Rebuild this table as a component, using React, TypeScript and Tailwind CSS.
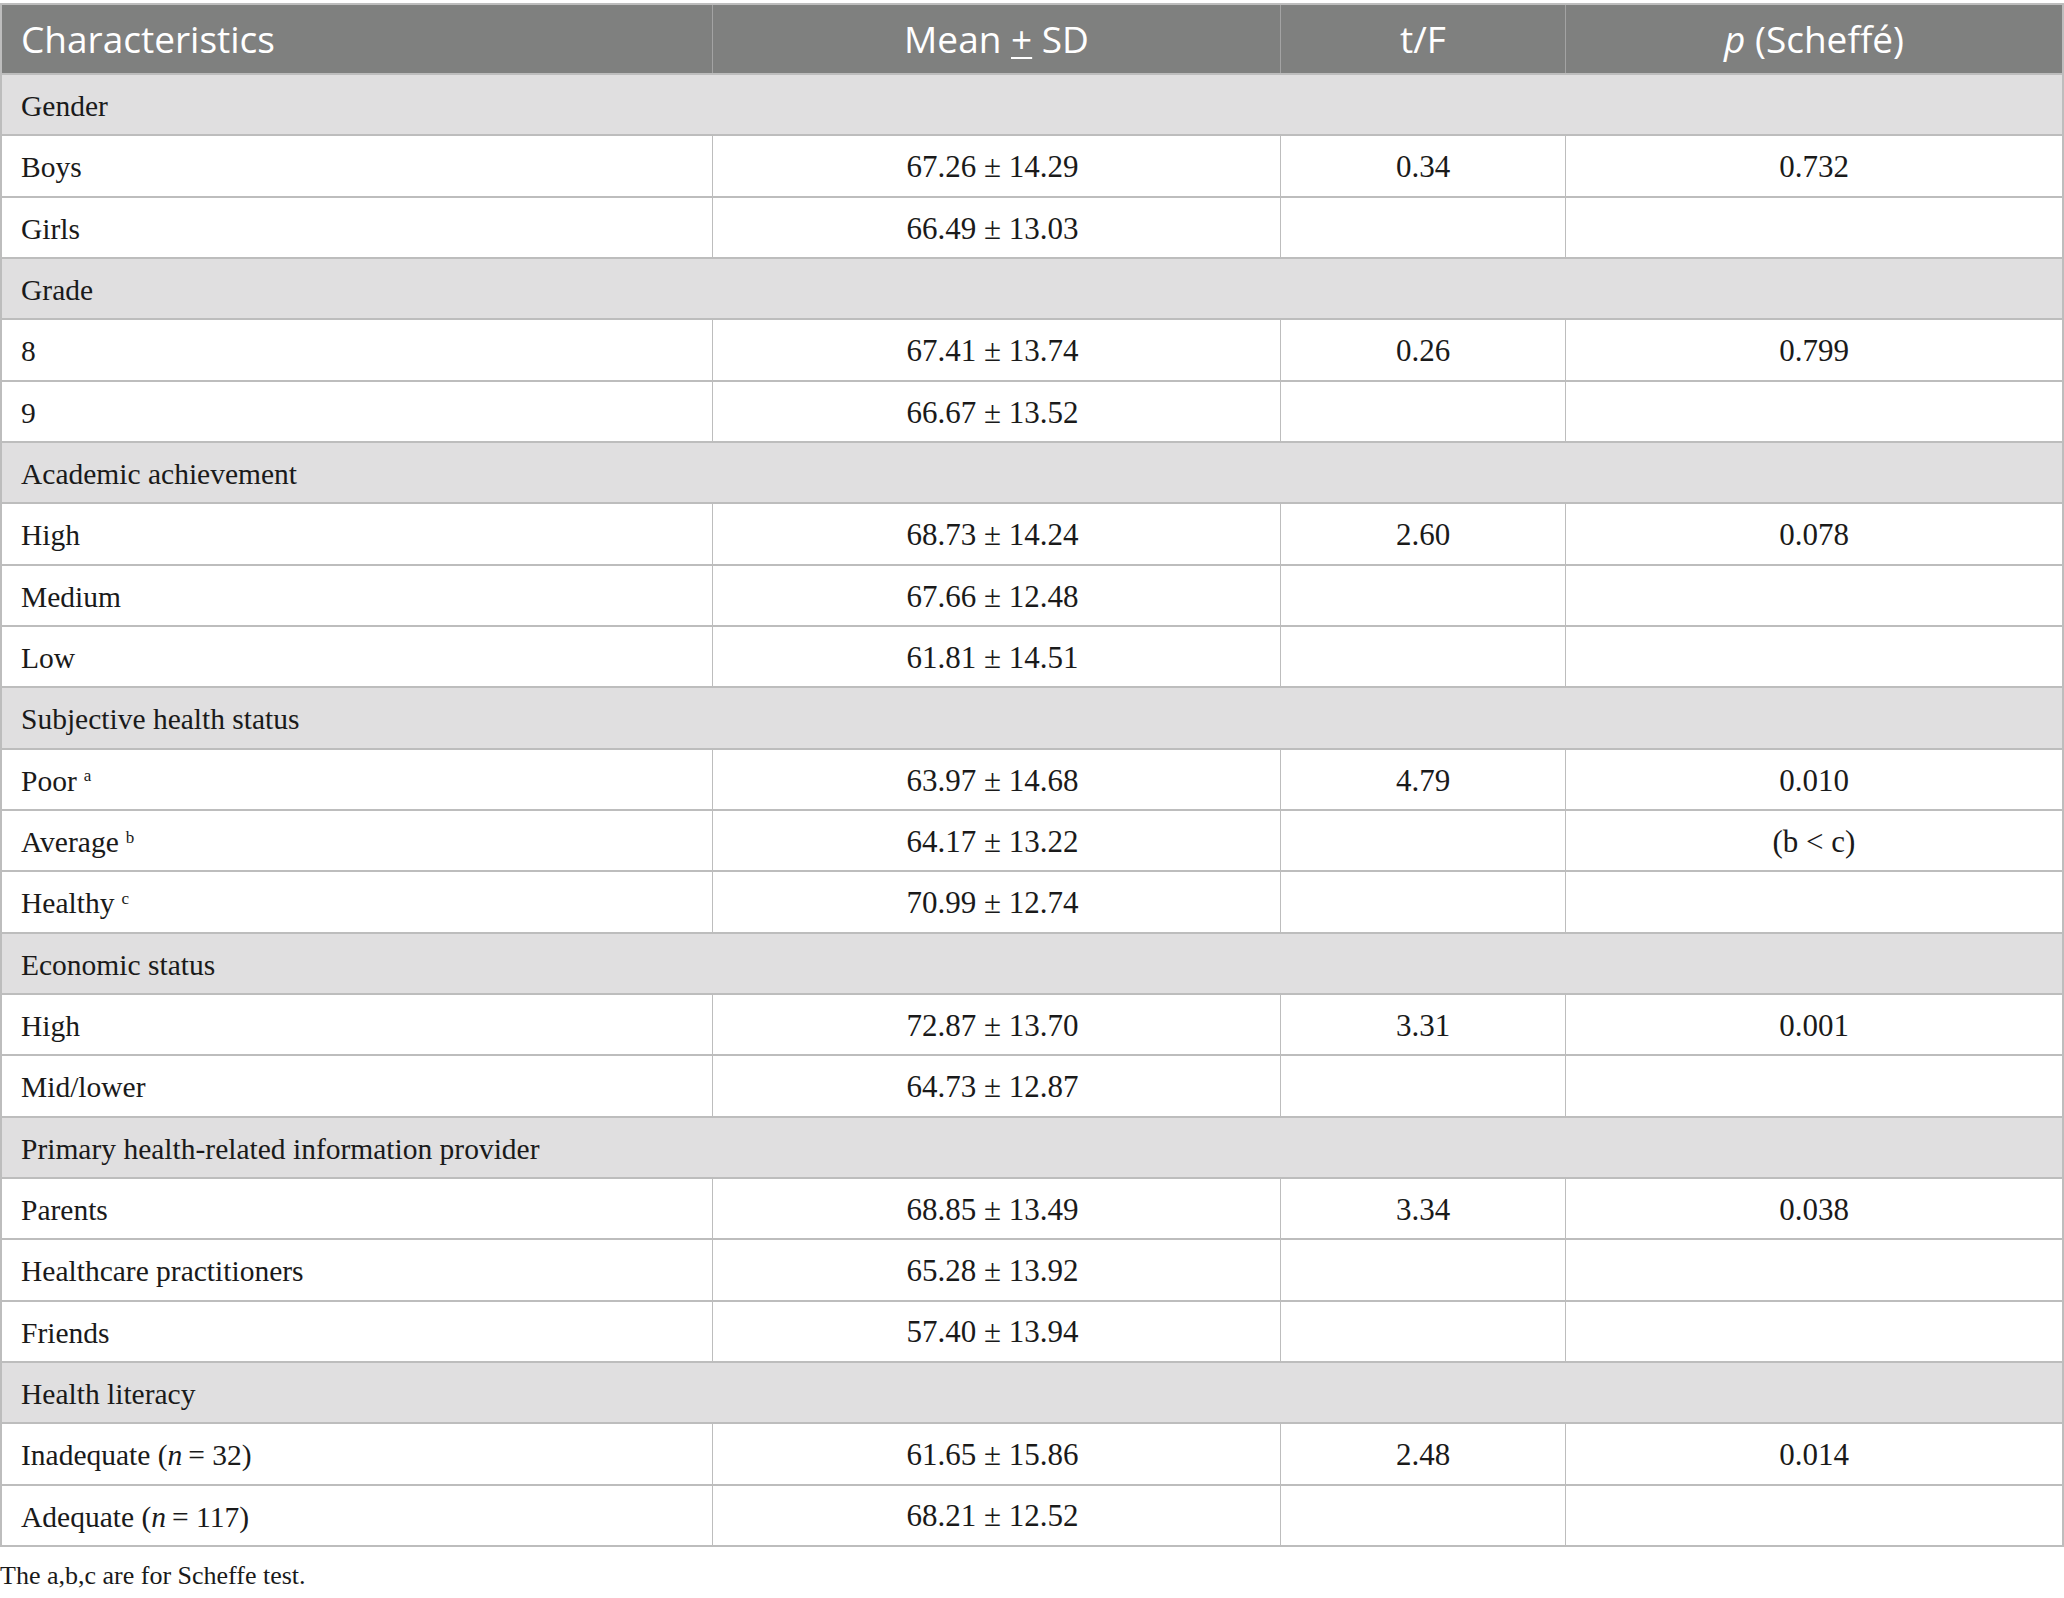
type Row =
  | { kind: "group"; label: string }
  | { kind: "data"; label: React.ReactNode; mean: string; t?: string; p?: string };

const sup = (s: string) => (
  <sup className="relative top-[-5px] ml-[7px] text-[17px] align-super leading-none">{s}</sup>
);

const rows: Row[] = [
  { kind: "group", label: "Gender" },
  { kind: "data", label: "Boys", mean: "67.26 ± 14.29", t: "0.34", p: "0.732" },
  { kind: "data", label: "Girls", mean: "66.49 ± 13.03" },
  { kind: "group", label: "Grade" },
  { kind: "data", label: "8", mean: "67.41 ± 13.74", t: "0.26", p: "0.799" },
  { kind: "data", label: "9", mean: "66.67 ± 13.52" },
  { kind: "group", label: "Academic achievement" },
  { kind: "data", label: "High", mean: "68.73 ± 14.24", t: "2.60", p: "0.078" },
  { kind: "data", label: "Medium", mean: "67.66 ± 12.48" },
  { kind: "data", label: "Low", mean: "61.81 ± 14.51" },
  { kind: "group", label: "Subjective health status" },
  { kind: "data", label: <>Poor{sup("a")}</>, mean: "63.97 ± 14.68", t: "4.79", p: "0.010" },
  { kind: "data", label: <>Average{sup("b")}</>, mean: "64.17 ± 13.22", p: "(b < c)" },
  { kind: "data", label: <>Healthy{sup("c")}</>, mean: "70.99 ± 12.74" },
  { kind: "group", label: "Economic status" },
  { kind: "data", label: "High", mean: "72.87 ± 13.70", t: "3.31", p: "0.001" },
  { kind: "data", label: "Mid/lower", mean: "64.73 ± 12.87" },
  { kind: "group", label: "Primary health-related information provider" },
  { kind: "data", label: "Parents", mean: "68.85 ± 13.49", t: "3.34", p: "0.038" },
  { kind: "data", label: "Healthcare practitioners", mean: "65.28 ± 13.92" },
  { kind: "data", label: "Friends", mean: "57.40 ± 13.94" },
  { kind: "group", label: "Health literacy" },
  {
    kind: "data",
    label: (
      <>
        Inadequate (<i className="mr-[6px]">n</i>= 32)
      </>
    ),
    mean: "61.65 ± 15.86",
    t: "2.48",
    p: "0.014",
  },
  {
    kind: "data",
    label: (
      <>
        Adequate (<i className="mr-[6px]">n</i>= 117)
      </>
    ),
    mean: "68.21 ± 12.52",
  },
];

const cols = "grid grid-cols-[710px_568px_285px_1fr]";

export default function App() {
  return (
    <div className="w-[2064px] min-h-[1598px] bg-white pt-[3px] text-[#1a1a1a] font-['Liberation_Serif',serif]">
      <div className="border-2 border-[#bdbdbd]">
        {/* header */}
        <div className={`${cols} h-[68px] bg-[#7f807f] text-white text-[37px] font-['Open_Sans',sans-serif] font-normal`}>
          <div className="flex items-center pl-[19px]">Characteristics</div>
          <div className="flex items-center justify-center border-l border-[#a3a3a3]">
            Mean&nbsp;<span className="underline decoration-2 underline-offset-[4px]">+</span>&nbsp;SD
          </div>
          <div className="flex items-center justify-center border-l border-[#a3a3a3]">t/F</div>
          <div className="flex items-center justify-center border-l border-[#a3a3a3]">
            <i>p</i>&nbsp;(Scheffé)
          </div>
        </div>

        {rows.map((r, i) =>
          r.kind === "group" ? (
            <div
              key={i}
              className="h-[61.33px] flex items-center pl-[19px] pt-[3px] bg-[#e0dfe0] border-t-2 border-[#bdbdbd] text-[29.5px]"
            >
              {r.label}
            </div>
          ) : (
            <div key={i} className={`${cols} h-[61.33px] border-t-2 border-[#bdbdbd] text-[29.5px]`}>
              <div className="flex items-center pl-[19px] pt-[3px]">{r.label}</div>
              <div className="flex items-center justify-center pt-[3px] pr-[8px] text-[31px] border-l border-[#bdbdbd]">{r.mean}</div>
              <div className="flex items-center justify-center pt-[3px] text-[31px] border-l border-[#bdbdbd]">{r.t}</div>
              <div className="flex items-center justify-center pt-[3px] text-[31px] border-l border-[#bdbdbd]">{r.p}</div>
            </div>
          )
        )}
      </div>
      <p className="mt-[14px] text-[26px] leading-[30px]">The a,b,c are for Scheffe test.</p>
    </div>
  );
}
